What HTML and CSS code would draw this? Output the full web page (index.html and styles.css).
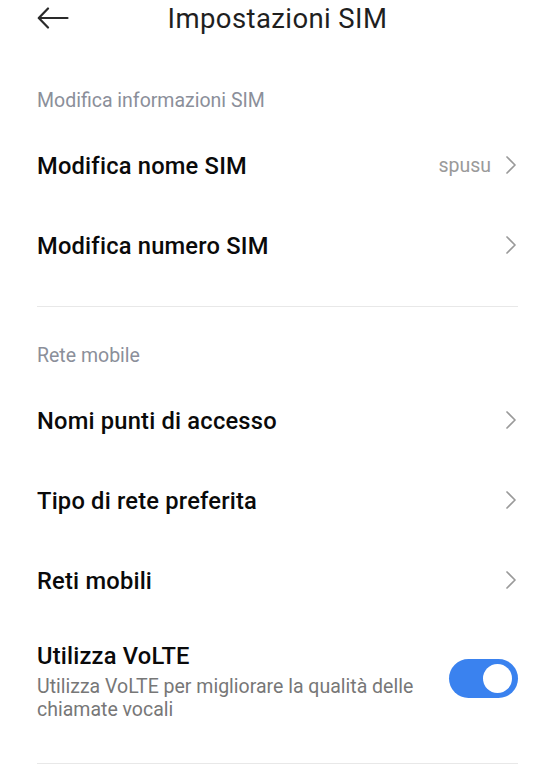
FILE: index.html
```html
<!DOCTYPE html>
<html lang="it">
<head>
<meta charset="utf-8">
<title>Impostazioni SIM</title>
<link rel="stylesheet" href="styles.css">
</head>
<body>
<div class="screen">
  <header class="appbar">
    <div class="back">
      <svg width="32" height="22" viewBox="0 0 32 22" fill="none" stroke="#2a2a2a" stroke-width="2.2" stroke-linecap="round" stroke-linejoin="round"><path d="M11 1.5 L1.8 11 L11 20.5"/><path d="M2 11 H30.5"/></svg>
    </div>
    <h1 class="title">Impostazioni SIM</h1>
    <div></div>
  </header>

  <section class="group">
    <div class="group-title">Modifica informazioni SIM</div>
    <div class="row">
      <span class="row-label">Modifica nome SIM</span>
      <span class="row-end"><span class="row-value">spusu</span><svg class="chev" width="12" height="20" viewBox="0 0 12 20" fill="none" stroke="#9a9a9a" stroke-width="1.7" stroke-linecap="round" stroke-linejoin="round"><path d="M2 2 L10 10 L2 18"/></svg></span>
    </div>
    <div class="row">
      <span class="row-label">Modifica numero SIM</span>
      <span class="row-end"><svg class="chev" width="12" height="20" viewBox="0 0 12 20" fill="none" stroke="#9a9a9a" stroke-width="1.7" stroke-linecap="round" stroke-linejoin="round"><path d="M2 2 L10 10 L2 18"/></svg></span>
    </div>
  </section>

  <div class="divider"></div>

  <section class="group">
    <div class="group-title second">Rete mobile</div>
    <div class="row">
      <span class="row-label">Nomi punti di accesso</span>
      <span class="row-end"><svg class="chev" width="12" height="20" viewBox="0 0 12 20" fill="none" stroke="#9a9a9a" stroke-width="1.7" stroke-linecap="round" stroke-linejoin="round"><path d="M2 2 L10 10 L2 18"/></svg></span>
    </div>
    <div class="row">
      <span class="row-label">Tipo di rete preferita</span>
      <span class="row-end"><svg class="chev" width="12" height="20" viewBox="0 0 12 20" fill="none" stroke="#9a9a9a" stroke-width="1.7" stroke-linecap="round" stroke-linejoin="round"><path d="M2 2 L10 10 L2 18"/></svg></span>
    </div>
    <div class="row">
      <span class="row-label">Reti mobili</span>
      <span class="row-end"><svg class="chev" width="12" height="20" viewBox="0 0 12 20" fill="none" stroke="#9a9a9a" stroke-width="1.7" stroke-linecap="round" stroke-linejoin="round"><path d="M2 2 L10 10 L2 18"/></svg></span>
    </div>
    <div class="row-switch">
      <div class="switch-text">
        <div class="row-label">Utilizza VoLTE</div>
        <div class="row-sub">Utilizza VoLTE per migliorare la qualità delle chiamate vocali</div>
      </div>
      <div class="toggle on"><span class="knob"></span></div>
    </div>
  </section>

  <div class="divider last"></div>
</div>
</body>
</html>
```

FILE: styles.css
```css
html, body {
  margin: 0;
  padding: 0;
  background: #ffffff;
}

body {
  font-family: Roboto, "Noto Sans", "Liberation Sans", sans-serif;
  color: #000;
}

.screen {
  width: 557px;
  padding: 0 39px 0 37px;
  box-sizing: border-box;
}

.appbar {
  height: 38px;
  display: grid;
  grid-template-columns: 1fr auto 1fr;
  align-items: center;
}

.back {
  display: flex;
  align-items: center;
  height: 38px;
}

.back svg {
  display: block;
  margin-top: -2px;
}

.title {
  margin: 0;
  font-size: 27.5px;
  font-weight: 400;
  color: #1f1f1f;
  letter-spacing: 0.4px;
  line-height: 38px;
}

.group-title {
  font-size: 19.5px;
  line-height: 24px;
  color: #8b8f9a;
  padding: 51px 0 12px;
}

.group-title.second {
  padding-top: 37px;
}

.row {
  height: 80px;
  display: flex;
  align-items: center;
  justify-content: space-between;
}

.row-label {
  font-size: 23.7px;
  font-weight: 500;
  color: #0a0a0a;
  letter-spacing: 0.2px;
  line-height: 30px;
}

.row > .row-label {
  padding-top: 2px;
}

.row-end {
  display: flex;
  align-items: center;
  gap: 14px;
}

.row-value {
  font-size: 19.5px;
  color: #9a9a9a;
}

.chev {
  display: block;
  margin-right: 1px;
}

.divider {
  height: 1px;
  background: #e8e8e8;
  margin-top: 21px;
}

.divider.last {
  margin-top: 0;
}

.row-switch {
  display: flex;
  align-items: center;
  justify-content: space-between;
  padding: 21px 0 42px;
}

.switch-text {
  max-width: 400px;
}

.row-sub {
  margin-top: 4px;
  font-size: 19.5px;
  line-height: 23px;
  color: #777777;
}

.toggle {
  width: 69px;
  height: 39px;
  border-radius: 20px;
  background: #3a82ef;
  box-sizing: border-box;
  padding: 5px 6px;
  display: flex;
  align-items: center;
  justify-content: flex-end;
  margin-top: -5px;
}

.knob {
  width: 29px;
  height: 29px;
  border-radius: 50%;
  background: #ffffff;
}
```
